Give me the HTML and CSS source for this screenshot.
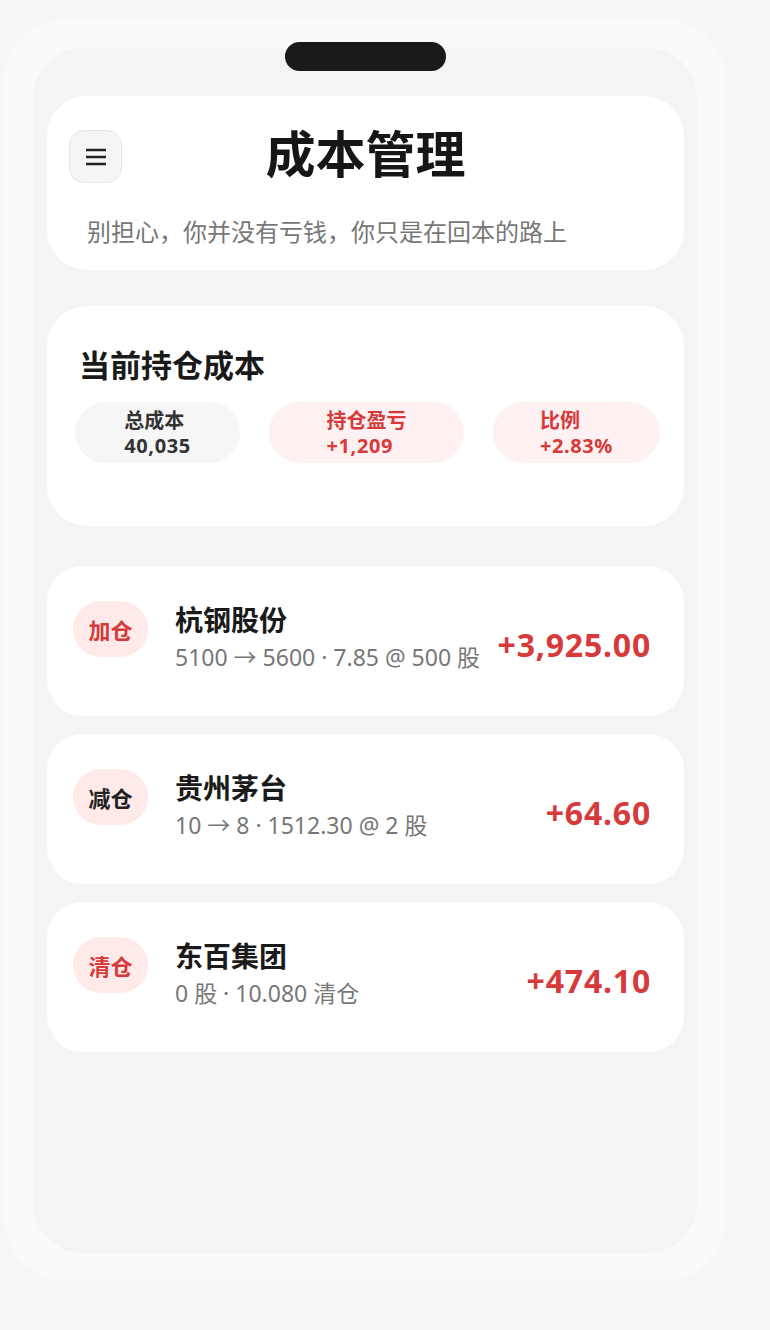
FILE: index.html
```html
<!DOCTYPE html>
<html lang="zh-CN">
<head>
<meta charset="utf-8">
<title>成本管理</title>
<link rel="stylesheet" href="styles.css">
</head>
<body>
<div class="frame">
  <div class="notch"></div>
  <div class="screen">
    <header class="card header">
      <div class="header-top">
        <button class="menu" aria-label="菜单">
          <svg width="22" height="22" viewBox="0 0 22 22"><path d="M1 4h20M1 11h20M1 18h20" stroke="#222" stroke-width="2.6" fill="none"/></svg>
        </button>
        <h1 class="title">成本管理</h1>
        <span class="spacer"></span>
      </div>
      <p class="subtitle">别担心，你并没有亏钱，你只是在回本的路上</p>
    </header>

    <section class="card cost">
      <h2 class="cost-title">当前持仓成本</h2>
      <div class="stats">
        <div class="stat stat-total"><div class="stat-inner"><div class="stat-label">总成本</div><div class="stat-value">40,035</div></div></div>
        <div class="stat stat-pnl red"><div class="stat-inner"><div class="stat-label">持仓盈亏</div><div class="stat-value">+1,209</div></div></div>
        <div class="stat stat-ratio red"><div class="stat-inner"><div class="stat-label">比例</div><div class="stat-value">+2.83%</div></div></div>
      </div>
    </section>

    <section class="trades">
      <div class="card trade">
        <span class="badge red-text">加仓</span>
        <div class="info">
          <div class="name">杭钢股份</div>
          <div class="detail">5100 → 5600 · 7.85 @ 500 股</div>
        </div>
        <div class="amount">+3,925.00</div>
      </div>
      <div class="card trade">
        <span class="badge dark-text">减仓</span>
        <div class="info">
          <div class="name">贵州茅台</div>
          <div class="detail">10 → 8 · 1512.30 @ 2 股</div>
        </div>
        <div class="amount">+64.60</div>
      </div>
      <div class="card trade">
        <span class="badge red-text">清仓</span>
        <div class="info">
          <div class="name">东百集团</div>
          <div class="detail">0 股 · 10.080 清仓</div>
        </div>
        <div class="amount">+474.10</div>
      </div>
    </section>
  </div>
</div>
</body>
</html>
```
FILE: styles.css
```css
* { box-sizing: border-box; }
html, body { margin: 0; padding: 0; }
body {
  background: #f6f7f9;
  font-family: "Noto Sans", "Noto Sans CJK SC", sans-serif;
  color: #1a1a1a;
  width: 770px;
  height: 1330px;
  overflow: hidden;
}
.frame {
  position: relative;
  margin: 20px 0 0 5px;
  width: 720px;
  height: 1260px;
  padding: 28px 28px 27px 28px;
  background: #fafafa;
  border-radius: 62px;
  box-shadow: 0 0 8px rgba(250, 250, 250, 0.9);
}
.notch {
  position: absolute;
  left: 280px;
  top: 22px;
  width: 161px;
  height: 29px;
  border-radius: 15px;
  background: #1a1a1a;
  z-index: 2;
}
.screen {
  height: 100%;
  background: #f4f4f4;
  border-radius: 50px;
  padding: 48px 13px 0 14px;
}
.card {
  background: #fff;
}
.header {
  height: 174px;
  border-radius: 40px;
  padding: 34px 22px 0 22px;
}
.header-top {
  display: grid;
  grid-template-columns: 53px 1fr 53px;
  align-items: start;
}
.menu {
  width: 53px;
  height: 53px;
  border-radius: 15px;
  background: #f5f5f5;
  border: 1px solid #e6e6e6;
  padding: 0;
  display: flex;
  align-items: center;
  justify-content: center;
}
.title {
  margin: -9px 0 0 0;
  text-align: center;
  font-family: "Noto Sans CJK SC", sans-serif;
  font-weight: 700;
  font-size: 50px;
  line-height: 60px;
  color: #161616;
}
.subtitle {
  margin: 33px 0 0 18px;
  font-family: "Noto Sans CJK SC", sans-serif;
  font-size: 24px;
  line-height: 30px;
  color: #777;
}
.cost {
  margin-top: 36px;
  height: 220px;
  border-radius: 40px;
  padding: 36px 24px 0 28px;
}
.cost-title {
  margin: 0 0 0 4px;
  font-family: "Noto Sans CJK SC", sans-serif;
  font-weight: 700;
  font-size: 31px;
  line-height: 44px;
  color: #1a1a1a;
}
.stats {
  display: flex;
  gap: 29px;
  margin-top: 16px;
}
.stat {
  height: 61px;
  border-radius: 31px;
  background: #f6f6f6;
  display: flex;
  align-items: center;
  justify-content: center;
  color: #333;
}
.stat-total { width: 165px; }
.stat-pnl { width: 195px; }
.stat-ratio { width: 167px; }
.stat.red { background: #fff1f1; color: #d63a3a; }
.stat-label, .stat-value {
  font-weight: 700;
  font-size: 20px;
  line-height: 25px;
}
.stat-value { letter-spacing: 0.6px; }
.trades {
  margin-top: 40px;
  display: flex;
  flex-direction: column;
  gap: 18px;
}
.trade {
  height: 150px;
  border-radius: 36px;
  padding: 35px 33px 0 26px;
  display: flex;
  align-items: flex-start;
}
.badge {
  flex: none;
  width: 75px;
  height: 56px;
  border-radius: 28px;
  background: #ffe9e9;
  display: flex;
  align-items: center;
  justify-content: center;
  font-family: "Noto Sans CJK SC", sans-serif;
  font-weight: 700;
  font-size: 22px;
}
.red-text { color: #d63a3a; }
.dark-text { color: #222; }
.info {
  margin-left: 27px;
  flex: 1;
}
.name {
  font-family: "Noto Sans CJK SC", sans-serif;
  font-weight: 700;
  font-size: 28px;
  line-height: 36px;
  color: #1a1a1a;
}
.detail {
  margin-top: 3px;
  font-size: 23px;
  line-height: 34px;
  color: #777;
  white-space: nowrap;
}
.amount {
  margin-top: 24px;
  font-weight: 700;
  font-size: 32px;
  line-height: 40px;
  letter-spacing: 0.8px;
  color: #d63a3a;
  white-space: nowrap;
}
```
